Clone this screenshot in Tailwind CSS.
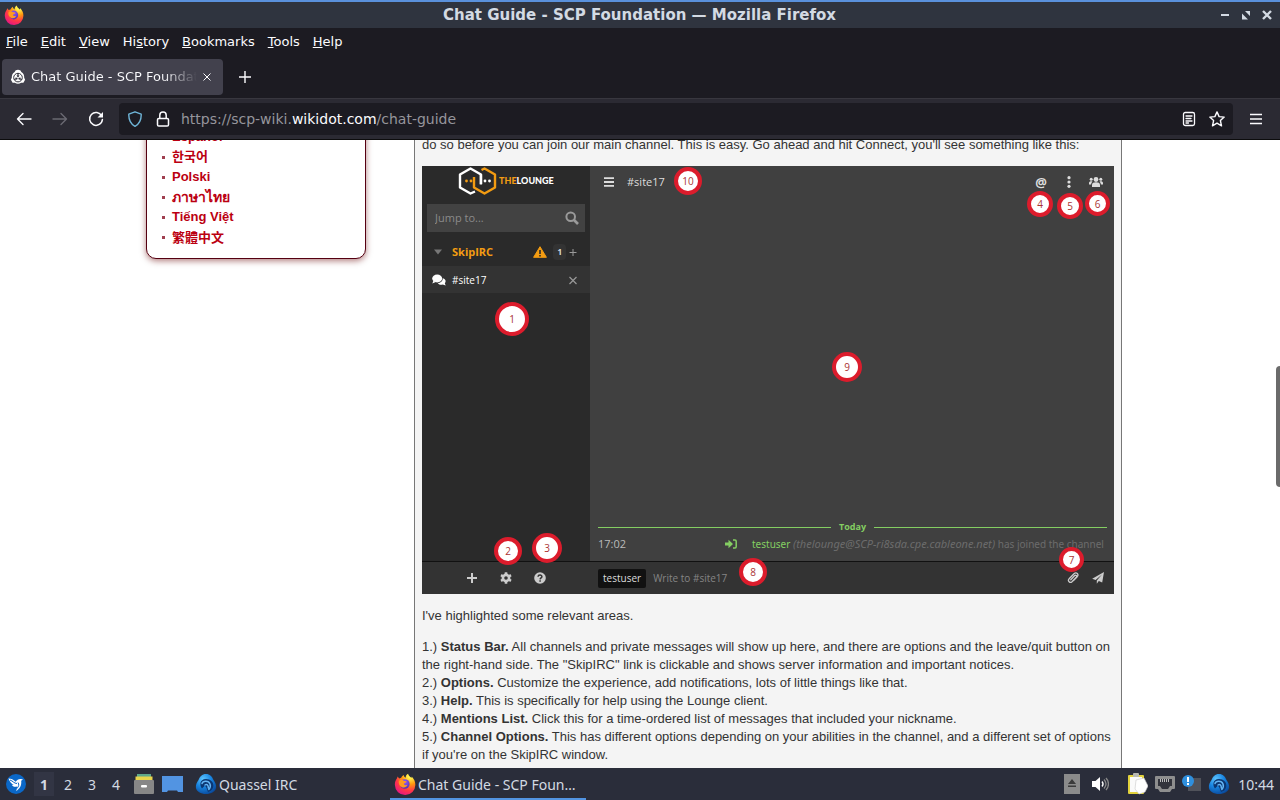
<!DOCTYPE html>
<html lang="en">
<head>
  <meta charset="UTF-8" />
  <meta name="viewport" content="width=device-width, initial-scale=1" />
  <title>Chat Guide - SCP Foundation</title>
  <script src="https://cdn.jsdelivr.net/npm/@tailwindcss/browser@4"></script>
</head>
<body class="h-screen flex flex-col overflow-hidden bg-white font-['DejaVu_Sans',sans-serif] text-[13px]">
  <!-- Shared icon artwork -->
  <svg class="absolute size-0" aria-hidden="true">
    <defs>
      <radialGradient id="ffFlame" cx="0.75" cy="0.1" r="1">
        <stop offset="0.1" stop-color="#fff44f" />
        <stop offset="0.4" stop-color="#ff980e" />
        <stop offset="0.7" stop-color="#ff3647" />
        <stop offset="1" stop-color="#e31587" />
      </radialGradient>
      <radialGradient id="ffGlobe" cx="0.5" cy="0.3" r="0.8">
        <stop offset="0" stop-color="#9059ff" />
        <stop offset="1" stop-color="#4a2ba8" />
      </radialGradient>
      <radialGradient id="quasselBlue" cx="0.35" cy="0.25" r="0.8">
        <stop offset="0" stop-color="#5cc4ff" />
        <stop offset="0.5" stop-color="#1884e0" />
        <stop offset="1" stop-color="#0a4a9c" />
      </radialGradient>
    </defs>
    <symbol id="firefox" viewBox="0 0 20 20">
      <path fill="url(#ffFlame)" d="M2.6 5 3.3 3.2 4.7 5 6.5 4.4C7.2 3 8 2.4 8.9 1.8c.1 1.4.7 2 1.8 2.6C10.400 2.500 11.700 1.200 12.800.6c.3 1.800 1.700 2.600 3 3.800.4-.4.4-.9.300-1.300C18.300 5.400 19.500 8 19.400 10.700A9.300 9.100 0 0 1 .8 11C.7 8.600 1.400 6.600 2.600 5z" />
      <circle cx="9.800" cy="10" r="4.400" fill="url(#ffGlobe)" />
      <path fill="#ff9a1f" d="M4.500 7.200c1.500-1.400 3.200-1.200 4.600.1 1 .2 2 .1 2.400.6-.5 1-2 1-2.500 1.900-.1 1.200 1.600 1.700 3.200.9-.8 2.400-3.300 3.100-5.300 2-2-1.100-3-3.300-2.400-5.500z" />
    </symbol>
    <symbol id="quassel" viewBox="0 0 22 22">
      <path fill="url(#quasselBlue)" d="M11 1c4 0 6 2.500 7.500 6 1.500 2.500 3 4.500 2.600 7.500-.4 4-5 6.500-10.100 6.500S1.300 18.500.9 14.500C.6 11.500 2 9.500 3.500 7 5 3.500 7 1 11 1z" />
      <path fill="#0b3672" d="M11 6c4.600 0 7.400 3 7.400 6.600 0 2-.8 3.600-2.200 4.800L13 19c-1-3-1.500-5-3.200-6.200L7 15.500C4.600 13 4.300 6 11 6z" />
      <path fill="none" stroke="#64b4f4" stroke-width="1.500" stroke-linecap="round" d="M7 10.500c1-3 6.500-3 8 .5 1 2.500-.2 4.300-1.200 5.500M10 12c2-1.400 3.500.500 3.300 3" />
    </symbol>
  </svg>

  <!-- Window title bar -->
  <header class="h-7 shrink-0 flex items-center border-t-2 border-[#5a91dc] bg-[#2f343f] px-1 text-[#d3dae3]">
    <svg class="size-5"><use href="#firefox" /></svg>
    <h1 class="flex-1 pl-9 text-center text-[15px] font-bold">Chat Guide - SCP Foundation — Mozilla Firefox</h1>
    <div class="flex items-center gap-[9px] pr-[3px]">
      <button aria-label="Minimize" class="size-3"><svg viewBox="0 0 12 12" stroke="currentColor" stroke-width="2"><path d="M2 6h8" /></svg></button>
      <button aria-label="Maximize" class="size-3"><svg viewBox="0 0 12 12" fill="currentColor"><path d="M5 2h5v5zM2 4.500v6h6z" /></svg></button>
      <button aria-label="Close" class="size-3"><svg viewBox="0 0 12 12" stroke="currentColor" stroke-width="2.400"><path d="M2 2l8 8M10 2l-8 8" /></svg></button>
    </div>
  </header>

  <!-- Menu bar -->
  <nav class="h-[27px] shrink-0 flex items-center gap-[13px] bg-[#1c1b22] px-1.5 text-[#fbfbfe]">
    <button><u>F</u>ile</button>
    <button><u>E</u>dit</button>
    <button><u>V</u>iew</button>
    <button>Hi<u>s</u>tory</button>
    <button><u>B</u>ookmarks</button>
    <button><u>T</u>ools</button>
    <button><u>H</u>elp</button>
  </nav>

  <!-- Tabs -->
  <div class="h-[43px] shrink-0 flex items-center bg-[#1c1b22] px-0.5 text-[#fbfbfe]">
    <div class="flex h-9 w-[221px] items-center rounded bg-[#42414d] pl-2 pr-2.5">
      <svg class="size-4 shrink-0" viewBox="0 0 16 16">
        <path fill="#fff" d="M5.500 1.500Q8 .2 10.500 1.500l.8 1.600a6.200 6.200 0 0 1 2.900 5.600l.9 2-1.700 3-2.200.1a6.500 6.500 0 0 1-6.400 0l-2.200-.1-1.700-3 .9-2a6.200 6.200 0 0 1 2.900-5.600z" />
        <circle cx="8" cy="8.600" r="4.300" fill="none" stroke="#33323d" stroke-width="1" />
        <path stroke="#33323d" stroke-width="1.200" d="M8 4.300v3M4.300 10.800l2.500-1.500M11.700 10.800L9.200 9.300" />
        <path fill="#33323d" d="M6.400 6.500h3.200L8 8.400zM5.300 8.500l1.600 2.700.8-2.300zM10.700 8.500l-1.600 2.700-.8-2.300z" />
      </svg>
      <span class="ml-[5px] mr-1 flex-1 overflow-hidden whitespace-nowrap bg-linear-to-r from-[#fbfbfe] from-80% to-transparent bg-clip-text text-transparent">Chat Guide - SCP Foundation</span>
      <button aria-label="Close tab" class="size-3 shrink-0"><svg viewBox="0 0 12 12" stroke="currentColor"><path d="M2.500 2.500l7 7M9.500 2.500l-7 7" /></svg></button>
    </div>
    <button aria-label="New tab" class="ml-3.5 size-4"><svg viewBox="0 0 16 16" stroke="currentColor" stroke-width="1.400"><path d="M2 8h12M8 2v12" /></svg></button>
  </div>

  <!-- Navigation toolbar -->
  <div class="h-[42px] shrink-0 flex items-center border-y border-t-[#38373f] border-b-[#0c0c0d] bg-[#2b2a33] px-4 text-[#fbfbfe]">
    <button aria-label="Back" class="size-4"><svg viewBox="0 0 16 16" fill="none" stroke="currentColor" stroke-width="1.400" stroke-linecap="round" stroke-linejoin="round"><path d="M15 8H1.500M7 2.500L1.500 8 7 13.500" /></svg></button>
    <button aria-label="Forward" class="ml-5 size-4 text-[#6a6972]" disabled><svg viewBox="0 0 16 16" fill="none" stroke="currentColor" stroke-width="1.400" stroke-linecap="round" stroke-linejoin="round"><path d="M1 8h13.500M9 2.500L14.500 8 9 13.500" /></svg></button>
    <button aria-label="Reload" class="ml-5 size-4"><svg viewBox="0 0 16 16" fill="none" stroke="currentColor" stroke-width="1.500" stroke-linecap="round"><path d="M13.700 5A6.400 6.400 0 1 0 14.400 8.500" /><path fill="currentColor" stroke="none" d="M15 1v5.500H9.500z" /></svg></button>
    <div class="ml-[15px] flex h-8 flex-1 items-center rounded bg-[#1c1b22] px-2">
      <svg class="size-4" viewBox="0 0 16 16" fill="none" stroke-width="1.400" stroke-linejoin="round"><path stroke="#6fb5d8" d="M8 .8l6.200 2.300c.2 5-1 9.300-6.200 12.200C2.800 12.400 1.600 8.100 1.800 3.100z" /></svg>
      <svg class="ml-3 size-4" viewBox="0 0 16 16" fill="none" stroke="#fbfbfe" stroke-width="1.500"><rect x="2.500" y="7.500" width="11" height="7.500" rx="1.300" /><path d="M4.800 7.500V4.200a3.200 3.200 0 0 1 6.400 0v3.300" /></svg>
      <a href="#" class="ml-2.5 flex-1 text-[14px] text-[#96959c]">https://scp-wiki.<span class="text-[#fbfbfe]">wikidot.com</span>/chat-guide</a>
      <button aria-label="Reader view" class="size-4"><svg viewBox="0 0 16 16" fill="none" stroke="currentColor" stroke-width="1.300" stroke-linecap="round"><rect x="2.500" y="1.500" width="11" height="13" rx="1.800" /><path d="M5 5h6M5 7.500h5M5 10h6M5 12h2.500" /></svg></button>
      <button aria-label="Bookmark this page" class="ml-3 size-4"><svg viewBox="0 0 16 16" fill="none" stroke="currentColor" stroke-width="1.400" stroke-linejoin="round"><path d="M8 .9l2.100 4.700 5.100.5-3.800 3.500 1.100 5.200L8 12.200l-4.500 2.600 1.100-5.200L.8 6.100l5.100-.5z" /></svg></button>
    </div>
    <button aria-label="Open application menu" class="ml-[15px] size-4"><svg viewBox="0 0 16 16" stroke="currentColor" stroke-width="1.400"><path d="M2 3.500h12M2 8h12M2 12.500h12" /></svg></button>
  </div>

  <!-- Page viewport -->
  <div class="relative min-h-0 flex-1 overflow-hidden bg-white pr-3 font-['Liberation_Sans',sans-serif] text-[#333]">
    <div class="mx-auto flex h-full max-w-[976px] items-start gap-12">
      <!-- Languages -->
      <aside class="-mt-3.5 w-[220px] shrink-0 rounded-b-[10px] border border-[#501] bg-white pb-[11px] pl-[15px] shadow-[0_2px_6px_rgba(102,0,0,0.5)]">
        <ul class="font-['Liberation_Sans','Noto_Sans_CJK_KR',sans-serif] font-bold leading-5 text-[#b01] [&>li]:flex [&>li]:h-5 [&>li]:items-center [&>li]:gap-[7px] [&>li]:before:size-[3px] [&>li]:before:bg-[#a04050]">
          <li><a href="#">Español</a></li>
          <li><a href="#">한국어</a></li>
          <li><a href="#">Polski</a></li>
          <li><a href="#" class="text-[14px]">ภาษาไทย</a></li>
          <li><a href="#">Tiếng Việt</a></li>
          <li><a href="#" class="font-['Noto_Sans_CJK_TC',sans-serif]">繁體中文</a></li>
        </ul>
      </aside>

      <article class="-mt-1 flex-1 border-x border-[#777] bg-[#f4f4f4] px-[7px] pb-8 leading-[18px]">
        <p>do so before you can join our main channel. This is easy. Go ahead and hit Connect, you'll see something like this:</p>

        <!-- The Lounge client -->
        <figure class="relative mt-3 mb-[13px] flex h-[428px] bg-[#404040] font-['Open_Sans',sans-serif] text-[11px] text-[#ddd]">
          <div class="flex w-[168px] shrink-0 flex-col bg-[#2a2a2a]">
            <div class="flex h-[30px] items-center gap-0.5 pl-9">
              <svg class="h-7 w-[39px]" viewBox="0 0 39 28" fill="none" stroke-width="2.400" stroke-linejoin="round">
                <path stroke="#fff" d="M17 24.500l-4.500 2L2 20.500V7.500l10.500-6L23 7.500v9.500" />
                <path stroke="#f39c12" d="M23.500 3l3-1.500L37 7.500v13l-10.500 6L16 20.500V10" />
                <path stroke="#fff" d="M22.900 7.500v10" />
                <g stroke="none"><circle cx="8.500" cy="14" r="1.400" fill="#f39c12" /><circle cx="13" cy="14" r="1.400" fill="#f39c12" /><circle cx="27" cy="14" r="1.400" fill="#fff" /><circle cx="31.500" cy="14" r="1.400" fill="#fff" /></g>
              </svg>
              <span class="font-['Lato',sans-serif] text-[9px] font-black text-white"><span class="text-[#f39c12]">THE</span>LOUNGE</span>
            </div>
            <div class="mx-[5px] mt-2 flex h-7 items-center bg-[#424242] pl-2 pr-1.5">
              <input type="text" aria-label="Jump to" placeholder="Jump to..." class="min-w-0 flex-1 placeholder:text-[#8a8a8a]" />
              <svg class="size-3.5" viewBox="0 0 14 14" fill="none" stroke="#9a9a9a" stroke-width="2"><circle cx="5.700" cy="5.700" r="4.300" /><path stroke-width="2.600" d="M9 9l4 4" /></svg>
            </div>
            <div class="mt-1.5 flex h-7 items-center pl-3 pr-3">
              <svg class="h-1.5 w-2" viewBox="0 0 8 6" fill="#777"><path d="M0 .5h8L4 5.500z" /></svg>
              <a href="#" class="ml-2.5 flex-1 font-bold text-[#f39c12]">SkipIRC</a>
              <svg class="h-3 w-3.5" viewBox="0 0 14 12"><path fill="#f39c12" stroke="#f39c12" stroke-linejoin="round" d="M7 .7l6.400 10.600H.6z" /><path stroke="#2a2a2a" stroke-width="1.600" d="M7 4v4M7 9v1.500" /></svg>
              <span class="ml-1.5 rounded bg-[#333] px-1 text-[8px] font-bold leading-4">1</span>
              <button aria-label="Join a channel" class="ml-0.5 size-2.5"><svg viewBox="0 0 10 10" stroke="#999"><path d="M1.500 5.500h7M5 2v7" /></svg></button>
            </div>
            <div class="flex h-[27px] items-center bg-[#333] pl-2.5 pr-3">
              <svg class="h-3 w-3.5" viewBox="0 0 14 12" fill="#fff"><ellipse cx="5.200" cy="4.500" rx="5" ry="3.900" /><path d="M1.500 6.500L.3 9.500l3.500-1.500zM10.800 4.300c0 3-2.300 4.800-5 5 1.500 1.600 3.500 1.700 5 1.200l2.900 1-.9-2.200c1.500-1.600 1-4.200-2-5z" /></svg>
              <a href="#" class="ml-1.5 flex-1 text-[10px] text-white">#site17</a>
              <button aria-label="Leave" class="size-2.5"><svg viewBox="0 0 10 10" stroke="#999" stroke-width="1.200"><path d="M1.500 2l7 7M8.500 2l-7 7" /></svg></button>
            </div>
            <div class="mt-auto flex h-[33px] items-center justify-center gap-[22px] border-t border-[#111] bg-[#333] text-[#ccc]">
              <button aria-label="Connect to network" class="size-3"><svg viewBox="0 0 12 12" stroke="currentColor" stroke-width="2"><path d="M1 6h10M6 1v10" /></svg></button>
              <button aria-label="Settings" class="size-3"><svg viewBox="0 0 12 12"><circle cx="6" cy="6" r="3.100" fill="none" stroke="currentColor" stroke-width="2.600" /><path stroke="currentColor" stroke-width="2.600" d="M6 .3v2.200M6 9.500v2.200M1 3.200l2 1.100M9 7.700l2 1.100M1 8.800l2-1.100M9 4.300l2-1.100" /></svg></button>
              <button aria-label="Help" class="size-3"><svg viewBox="0 0 12 12"><circle cx="6" cy="6" r="5.800" fill="currentColor" /><path fill="none" stroke="#333" stroke-width="1.500" d="M4 4.700C4.200 2.500 8 2.600 7.900 4.700 7.800 6 6.200 5.900 6.100 7.400M6.100 8.300v1.500" /></svg></button>
            </div>
          </div>

          <div class="flex min-w-0 flex-1 flex-col">
            <div class="flex h-8 items-center pl-[13px] pr-[11px]">
              <button aria-label="Toggle channel list" class="size-3"><svg viewBox="0 0 12 12" stroke="#ddd" stroke-width="1.800"><path d="M1 2.200h10M1 6h10M1 9.800h10" /></svg></button>
              <span class="ml-3 flex-1">#site17</span>
              <button class="w-3 text-[13px] font-bold">@</button>
              <button aria-label="Channel options" class="ml-5 h-3 w-1"><svg viewBox="0 0 4 12" fill="#ddd"><circle cx="2" cy="1.700" r="1.600" /><circle cx="2" cy="6" r="1.600" /><circle cx="2" cy="10.300" r="1.600" /></svg></button>
              <button aria-label="Toggle user list" class="ml-[18px] h-3 w-3.5"><svg viewBox="0 0 14 12" fill="#ddd"><circle cx="7" cy="3.500" r="2.400" /><circle cx="2.200" cy="3.200" r="1.500" /><circle cx="11.800" cy="3.200" r="1.500" /><path d="M3 11V9c0-2 1.500-2.700 4-2.700s4 .7 4 2.700v2zM0 8.500V7c0-1.700 1.800-2 3.500-1.600C2.600 6.300 2.200 7.200 2.100 8.500zM14 8.500V7c0-1.700-1.800-2-3.500-1.600.9.900 1.300 1.800 1.400 3.100z" /></svg></button>
            </div>
            <div class="mt-auto flex items-center gap-2 pl-2 pr-[7px] text-[9px] font-bold leading-4 text-[#84ce62]">
              <span class="h-px flex-1 bg-[#84ce62]"></span>
              Today
              <span class="h-px flex-1 bg-[#84ce62]"></span>
            </div>
            <div class="mb-2 flex h-[18px] items-center whitespace-nowrap pl-2">
              <time class="w-[127px] text-[#bbb]">17:02</time>
              <svg class="h-2.5 w-3" viewBox="0 0 12 10" fill="#84ce62"><path d="M0 3.500h3.500V.8L8 5 3.500 9.200V6.500H0z" /><path fill="none" stroke="#84ce62" stroke-width="1.500" d="M8 1h2c.8 0 1.200.4 1.200 1.200v5.600C11.200 8.600 10.800 9 10 9H8" /></svg>
              <p class="ml-[15px] font-['Noto_Sans',sans-serif] text-[10px] text-[#6c6c6c]"><a href="#" class="text-[#84ce62]">testuser</a> <i class="text-[11px]">(thelounge@SCP-ri8sda.cpe.cableone.net)</i> has joined the channel</p>
            </div>
            <div class="flex h-[33px] items-center border-t border-[#111] bg-[#333] pl-2 pr-2.5 text-[10px]">
              <button class="h-[19px] rounded-xs bg-[#111] px-[5px] leading-[19px]">testuser</button>
              <input type="text" aria-label="Message" placeholder="Write to #site17" class="ml-[7px] min-w-0 flex-1 placeholder:text-[#858585]" />
              <button aria-label="Upload file" class="size-3"><svg viewBox="0 0 12 12" fill="none" stroke="#ccc" stroke-width="1.300" stroke-linecap="round"><path d="M3.800 7.700L7.700 3.600c1.200-1 2.500.4 1.600 1.500L5 9.700C3 11.500.2 9 2.100 6.800L7 1.700c2.500-2 5.200.6 3.200 3L6.500 8.500" /></svg></button>
              <button aria-label="Send message" class="ml-[13px] size-3"><svg viewBox="0 0 12 12" fill="#ccc"><path d="M12 0l-1.800 10.600-3.400-1.500-2 2.700V8.400L10 2.500 3.600 8 .2 6.700z" /></svg></button>
            </div>
          </div>

          <!-- Numbered callouts -->
          <ol class="text-[10px] text-[#a33] [&>li]:absolute [&>li]:flex [&>li]:items-center [&>li]:justify-center [&>li]:rounded-full [&>li]:border-4 [&>li]:border-[#dc1c2c] [&>li]:bg-white">
            <li class="left-[73px] top-[136px] size-[34px]">1</li>
            <li class="left-[72px] top-[371px] size-7">2</li>
            <li class="left-[110px] top-[367px] size-[30px]">3</li>
            <li class="right-[61px] top-[25px] size-[26px]">4</li>
            <li class="right-[31px] top-[27px] size-[26px]">5</li>
            <li class="right-[4px] top-[25px] size-[25px]">6</li>
            <li class="right-[30px] top-[381px] size-[25px]">7</li>
            <li class="left-[317px] top-[392px] size-7">8</li>
            <li class="left-[410px] top-[186px] size-[30px]">9</li>
            <li class="left-[252px] top-[1px] size-7">10</li>
          </ol>
        </figure>

        <p>I've highlighted some relevant areas.</p>
        <p class="mt-[13px]">
          1.) <strong>Status Bar.</strong> All channels and private messages will show up here, and there are options and the leave/quit button on the right-hand side. The "SkipIRC" link is clickable and shows server information and important notices.<br>
          2.) <strong>Options.</strong> Customize the experience, add notifications, lots of little things like that.<br>
          3.) <strong>Help.</strong> This is specifically for help using the Lounge client.<br>
          4.) <strong>Mentions List.</strong> Click this for a time-ordered list of messages that included your nickname.<br>
          5.) <strong>Channel Options.</strong> This has different options depending on your abilities in the channel, and a different set of options if you're on the SkipIRC window.
        </p>
      </article>
    </div>
    <!-- Scrollbar thumb -->
    <div class="absolute right-0 top-[226px] h-[121px] w-1 rounded-l-sm bg-[#6b6b6b]"></div>
  </div>

  <!-- Taskbar -->
  <footer class="h-8 shrink-0 flex items-center bg-[#2a2d3a] px-1.5 font-['Noto_Sans',sans-serif] text-[14px] text-[#d3dae3]">
    <button aria-label="Applications" class="size-5"><svg viewBox="0 0 20 20"><circle cx="10" cy="10" r="10" fill="#0b68c8" /><path fill="#fff" d="M2.500 4.500c2.500 0 5 1.200 7 3.200C11 6 13 4.500 15 5l2 .5-1.800 1.200c.5 4.500-1.200 8-5.200 10.300 1-2 1.300-3 .8-4.500-2.300.8-4.300-.2-5-1.800l2 .2C5 9.500 3.500 7.500 2.500 4.500z" /><path fill="none" stroke="#0b68c8" d="M4 6c3 1 4 3.500 7 3.500M12 8.500c1.500 2 .5 4-1 6" /></svg></button>
    <div class="ml-2 flex gap-1 text-center [&>button]:h-6 [&>button]:w-5">
      <button class="bg-[#323544] font-bold">1</button>
      <button>2</button>
      <button>3</button>
      <button>4</button>
    </div>
    <button aria-label="File manager" class="ml-2 h-[22px] w-5"><svg viewBox="0 0 20 22"><path fill="#5fa88a" d="M3 1h14v4H3z" /><path fill="#e8d44c" d="M1.500 3.500h17V8h-17z" /><rect y="7" width="20" height="14" rx="1" fill="#878787" /><rect x="7" y="12" width="6" height="2.500" rx="1" fill="#fff" /></svg></button>
    <button aria-label="Show desktop" class="ml-2 h-[18px] w-[21px]"><svg viewBox="0 0 21 18"><path fill="#5294e2" d="M0 1h21v16h-5l-1-1.500H6L5 17H0z" /></svg></button>
    <button class="ml-3 flex w-[195px] items-center gap-0.5"><svg class="size-[22px]"><use href="#quassel" /></svg>Quassel IRC</button>
    <button class="flex h-[30px] w-[196px] items-center gap-0.5 self-end border-b-2 border-[#5294e2] pl-1 pr-2"><svg class="size-[22px] shrink-0"><use href="#firefox" /></svg><span class="truncate">Chat Guide - SCP Foundation</span></button>
    <div class="ml-auto flex items-center">
      <svg class="h-5 w-4" viewBox="0 0 16 20"><rect width="16" height="20" fill="#8b8b8b" /><path fill="#3b3b3b" d="M8 5l4 5H4zM4 11.500h8V13H4z" /></svg>
      <svg class="ml-3 h-4 w-[17px]" viewBox="0 0 17 16"><path fill="#fff" d="M0 5h3.500L8 1v14l-4.500-4H0z" /><path fill="none" stroke="#fff" stroke-width="1.300" d="M10 5.500c1.300 1.500 1.300 3.500 0 5" /><path fill="none" stroke="#888" stroke-width="1.300" d="M12 3.500c2.500 2.800 2.500 6.200 0 9M14 2c3.300 3.500 3.300 8.500 0 12" /></svg>
      <svg class="ml-[19px] h-[22px] w-5" viewBox="0 0 20 22"><rect y="2" width="16" height="19" rx="1" fill="#e2d23c" /><path fill="#fafafa" d="M2 4h12v15H2z" /><rect x="5" width="6" height="4" rx="1" fill="#b9b9b0" /><path fill="#fff" stroke="#c9c9c9" stroke-width=".6" d="M8 7l8-2 4 8-3 6-6 2-4-5z" /></svg>
      <svg class="ml-[7px] h-[18px] w-5" viewBox="0 0 20 18"><path fill="#8e8e8e" d="M1 1h18q1 0 1 1v11q0 1-1 1h-2l-2 3H5l-2-3H1q-1 0-1-1V2q0-1 1-1z" /><path fill="#33343c" d="M3 4h14v7h-2l-2 3H7l-2-3H3z" /><path stroke="#bbb" d="M5.500 4v3M7.500 4v3M9.500 4v3M11.500 4v3M13.500 4v3" /></svg>
      <svg class="ml-[7px] h-5 w-[19px]" viewBox="0 0 19 20"><rect x="6" y="4" width="13" height="13" fill="#50525a" /><circle cx="6" cy="7" r="6" fill="#2f8fdd" /><path stroke="#fff" stroke-width="2" d="M6 3v5M6 9v2" /></svg>
      <svg class="ml-[7px] size-[22px]"><use href="#quassel" /></svg>
      <time class="ml-2">10:44</time>
    </div>
  </footer>
</body>
</html>
